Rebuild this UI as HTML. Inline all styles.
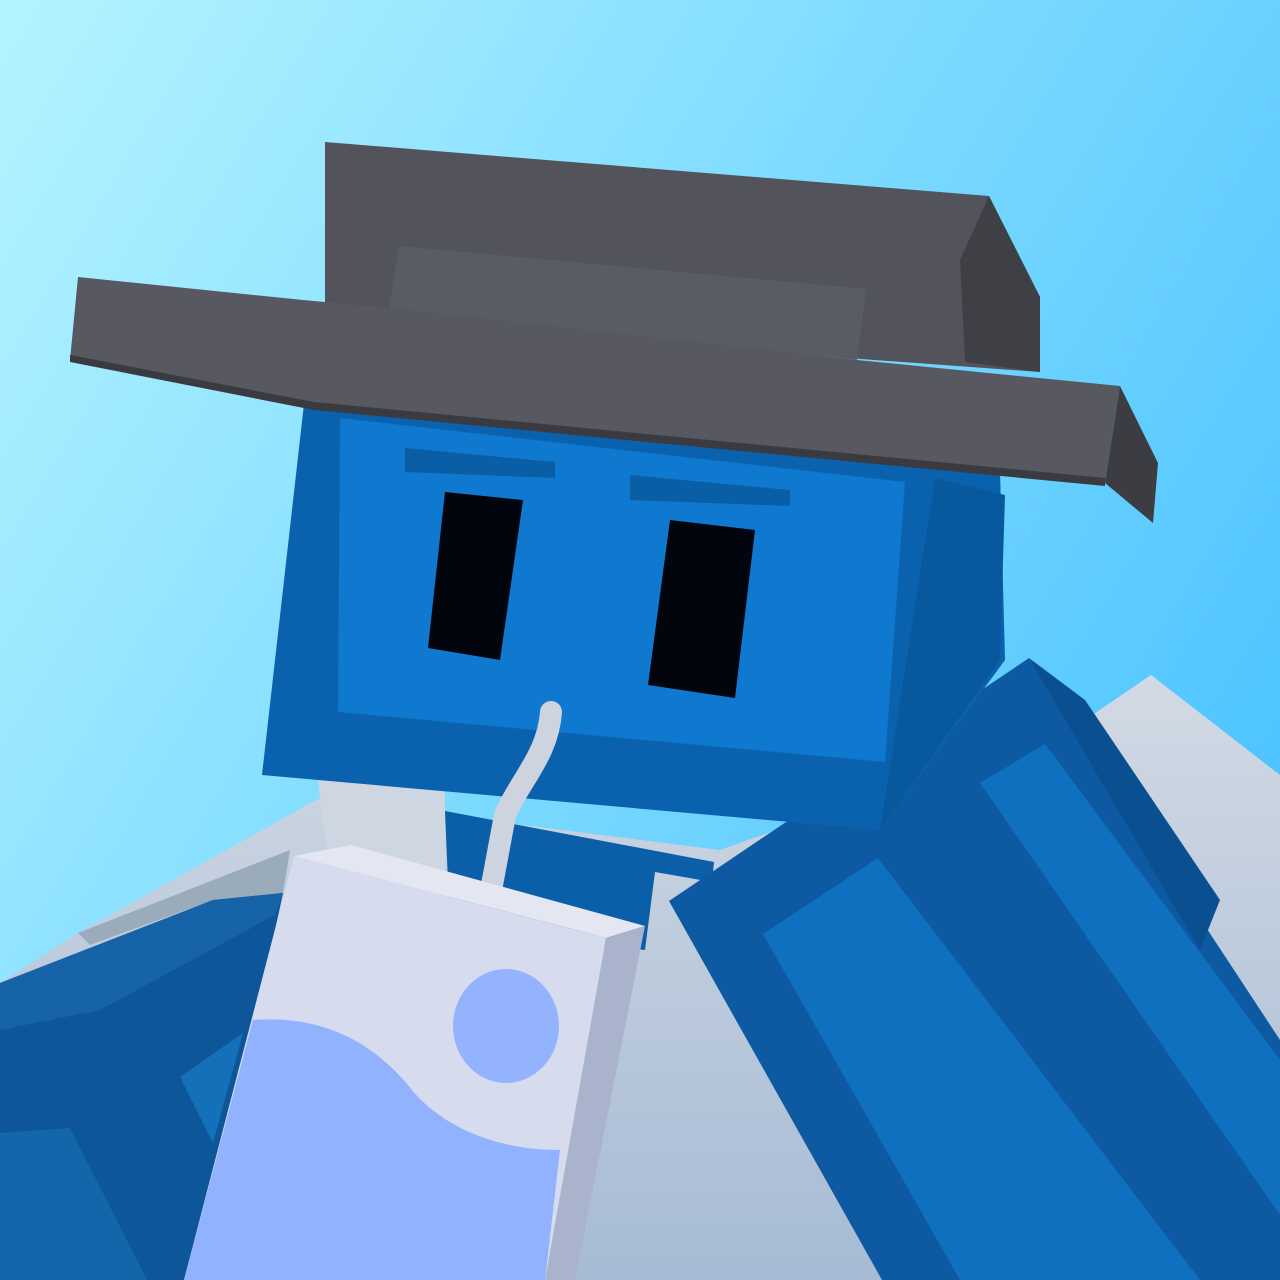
<!DOCTYPE html>
<html><head><meta charset="utf-8"><style>html,body{margin:0;padding:0;width:1280px;height:1280px;overflow:hidden}svg{display:block}</style></head>
<body>
<svg width="1280" height="1280" viewBox="0 0 1280 1280" xmlns="http://www.w3.org/2000/svg">
<defs>
<linearGradient id="bg" x1="0" y1="0" x2="1" y2="0.6">
<stop offset="0" stop-color="#b4f4ff"/><stop offset="1" stop-color="#4ec4ff"/></linearGradient>
<linearGradient id="shirt" x1="0" y1="0" x2="0" y2="1">
<stop offset="0" stop-color="#d2dae4"/><stop offset="1" stop-color="#a6bbd4"/></linearGradient>
</defs>
<rect width="1280" height="1280" fill="url(#bg)"/>
<polygon points="78,933 318,799 720,850 1082,722 1151,675 1280,775 1280,1280 0,1280 0,983" fill="url(#shirt)"/>
<polygon points="78,933 290,850 283,893 213,900 90,945" fill="#9aabbb"/>
<polygon points="318,780 445,790 445,900 330,880" fill="#cdd6e1"/>
<polygon points="445,811 714,862 712,882 655,872 645,950 450,930" fill="#0b5fa8"/>
<polygon points="0,983 213,900 283,893 260,1000 184,1280 0,1280" fill="#0e569a"/>
<polygon points="0,983 213,900 283,893 275,915 100,1010 0,1030" fill="#1663a8"/>
<polygon points="0,1133 70,1128 147,1280 0,1280" fill="#1466aa"/>
<polygon points="180,1077 243,1033 213,1143" fill="#1470b8"/>
<polygon points="669,901 1029,658 1280,1040 1280,1280 882,1280" fill="#0d5aa2"/>
<polygon points="763,934 878,858 1200,1280 960,1280" fill="#0f70c0"/>
<polygon points="980,783 1045,744 1280,1060 1280,1215" fill="#0f70c0"/>
<polygon points="1029,658 1085,700 1220,900 1200,950" fill="#0a4f90"/>
<polygon points="305,395 1000,470 1005,660 880,830 262,775" fill="#0a62ae"/>
<polygon points="935,478 1005,495 1000,660 880,830" fill="#08589e"/>
<polygon points="340,418 905,482 885,762 338,712" fill="#0f79cf"/>
<polygon points="405,448 555,462 555,478 405,472" fill="#0a5ea6"/>
<polygon points="630,475 790,490 790,506 630,500" fill="#0a5ea6"/>
<polygon points="445,492 523,500 500,660 428,648" fill="#02050d"/>
<polygon points="670,520 755,530 735,698 648,685" fill="#02050d"/>
<polygon points="325,142 989,196 1040,297 1040,372 325,320" fill="#52535b"/>
<polygon points="989,196 1040,297 1040,372 965,362 960,260" fill="#3f4046"/>
<polygon points="399,246 866,289 857,360 389,308" fill="#5a5c65"/>
<polygon points="78,277 303,300 389,308 857,360 1120,386 1105,483 314,407 70,360" fill="#575860"/>
<polygon points="70,355 314,402 1105,478 1105,486 314,410 70,362" fill="#3a3b41"/>
<polygon points="1120,386 1158,463 1153,523 1105,483" fill="#3c3d42"/>
<path d="M551,712 C548,755 520,780 505,815 L492,885" fill="none" stroke="#cdd4df" stroke-width="22" stroke-linecap="round" stroke-linejoin="round"/>
<polygon points="294,856 351,845 645,926 606,938" fill="#e4e7f2"/>
<polygon points="606,938 645,926 575,1280 545,1280" fill="#aab3cc"/>
<polygon points="294,856 606,938 545,1280 184,1280" fill="#d6dbed"/>
<path d="M253,1020 C320,1015 370,1040 408,1085 C430,1115 480,1150 560,1150 L545,1280 L184,1280 Z" fill="#90b2ff"/>
<ellipse cx="506" cy="1026" rx="53" ry="57" fill="#93b3ff"/>
</svg>
</body></html>
